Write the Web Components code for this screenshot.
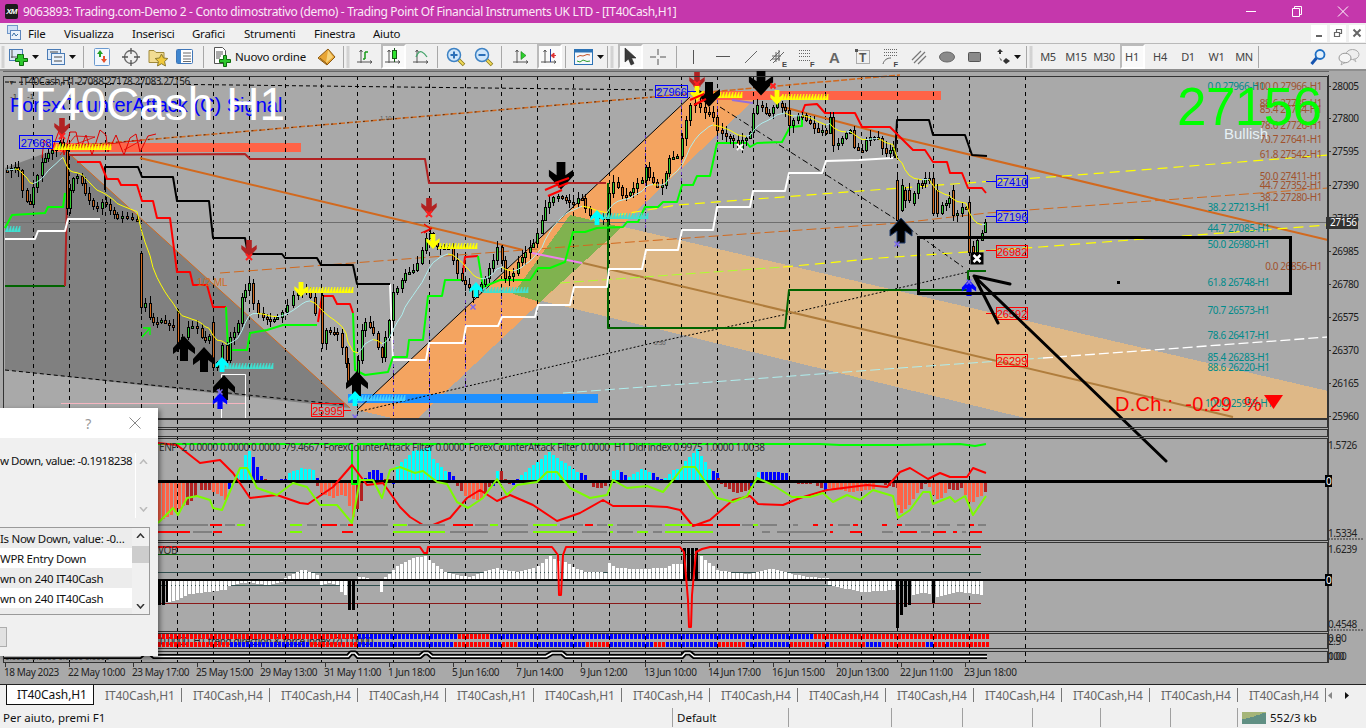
<!DOCTYPE html>
<html lang="it">
<head>
<meta charset="utf-8">
<title>IT40Cash,H1</title>
<style>
html,body{margin:0;padding:0;overflow:hidden;width:1366px;height:728px;background:#f0f0f0;font-family:"Noto Sans","Liberation Sans",sans-serif}
</style>
</head>
<body>
<mt-app>
  <title-bar>9063893: Trading.com-Demo 2 - Conto dimostrativo (demo) - Trading Point Of Financial Instruments UK LTD - [IT40Cash,H1]</title-bar>
  <menu-bar></menu-bar>
  <tool-bar></tool-bar>
  <chart-window></chart-window>
  <tab-strip></tab-strip>
  <status-bar></status-bar>
  <alert-dialog></alert-dialog>
</mt-app>
<script>
const UI='"Noto Sans","Liberation Sans",sans-serif';
function def(name,css,html,init){
  customElements.define(name,class extends HTMLElement{
    constructor(){super();const r=this.attachShadow({mode:'open'});r.innerHTML='<style>'+css+'</style>'+html;}
    connectedCallback(){if(init&&!this._d){this._d=1;init(this.shadowRoot,this);}}
  });
}
def('mt-app',':host{display:flex;flex-direction:column;position:relative;width:1366px;height:728px;overflow:hidden}','<slot></slot>');

def('title-bar',`:host{display:flex;align-items:center;height:23px;background:#c537ac;color:#fbeaf7;font:12px ${UI};flex:none}
.logo{width:13px;height:15px;margin:0 5px 0 5px;background:#1b1b1b;border-radius:2px;color:#fff;font:italic bold 8px "Liberation Sans",sans-serif;display:flex;align-items:center;justify-content:center;letter-spacing:-.8px}
.t{flex:1;white-space:nowrap;letter-spacing:-.34px}
.c{display:flex}
.c svg{width:46px;height:23px;display:block}`,
`<div class="logo">XM</div><div class="t"><slot></slot></div><div class="c">
<svg viewBox="0 0 46 23"><path d="M18 11.5h10" stroke="#fff"/></svg>
<svg viewBox="0 0 46 23"><path d="M18.5 8.5h7v8h-7zM20.5 8.5v-2h7v8h-2" fill="none" stroke="#fff"/></svg>
<svg viewBox="0 0 46 23"><path d="M18 6.5l10 10M28 6.5l-10 10" stroke="#fff"/></svg></div>`);

def('menu-bar',`:host{display:flex;align-items:center;height:20px;background:#f0f0f0;font:11.5px ${UI};letter-spacing:-.25px;color:#111;flex:none;padding-left:5px}
svg{width:17px;height:18px;flex:none;margin-right:6px}
span{display:block;white-space:nowrap}
.mdi{margin-left:auto;display:flex;gap:3px;margin-right:1px}
.mdi b{display:flex;width:16px;height:17px;background:#fff;align-items:center;justify-content:center}
.mdi svg{width:10px;height:10px;margin:0}`,
`<svg viewBox="0 0 17 18"><rect x="2.5" y="1.5" width="10" height="8" fill="#cfe0f5" stroke="#6f96c8"/><rect x="5.5" y="6.5" width="10" height="9" fill="#eaf2fb" stroke="#5c86bd"/><path d="M7 12l2-3 2 3 2-2" fill="none" stroke="#3a6ea5"/></svg>
<span style="width:36px">File</span><span style="width:68px">Visualizza</span><span style="width:60px">Inserisci</span><span style="width:52px">Grafici</span><span style="width:70px">Strumenti</span><span style="width:59px">Finestra</span><span>Aiuto</span>
<div class="mdi"><b><svg viewBox="0 0 10 10"><rect x="2" y="7" width="6" height="2" fill="#666"/></svg></b><b><svg viewBox="0 0 10 10"><path d="M1.5 4.5h5v4h-5zM3.5 4V1.5h5v4H7" fill="none" stroke="#666" stroke-width="1.2"/></svg></b><b><svg viewBox="0 0 10 10"><path d="M1.5 1.5l7 7M8.5 1.5l-7 7" stroke="#666" stroke-width="2"/></svg></b></div>`);

const ax='<path d="M6 3v13M2 15h15" stroke="#555" fill="none"/><path d="M4.5 5L6 3l1.5 2M15 13.5l2 1.5-2 1.5" stroke="#555" fill="none"/>';
const ICONS={
grip:w=>'<svg viewBox="0 0 4 22" width="4" height="22"><path d="M.5 1h3M.5 3h3M.5 5h3M.5 7h3M.5 9h3M.5 11h3M.5 13h3M.5 15h3M.5 17h3M.5 19h3M.5 21h3" stroke="#b5b5b5"/></svg>',
sep:()=>'<svg width="2" height="22"><rect width="1" height="22" fill="#a8a8a8"/></svg>',
dd:()=>'<svg width="7" height="4" viewBox="0 0 7 4"><path d="M0 0h7L3.500 4z" fill="#111"/></svg>',
new:()=>'<svg width="20" height="20" viewBox="0 0 20 20"><rect x="1.500" y="2.500" width="13" height="11" fill="#dbe8f7" stroke="#4a7bb5"/><path d="M4 3v8M3 10h9" stroke="#555"/><path d="M9.500 7.500h4v-0h2v4h4v3h-4v4h-4v-4h-4v-3h2z" fill="#2dc72d" stroke="#0d6b0d"/></svg>',
prof:()=>'<svg width="20" height="20" viewBox="0 0 20 20"><rect x="1.500" y="2.500" width="13" height="10" fill="#dbe8f7" stroke="#4a7bb5"/><rect x="5.500" y="6.500" width="13" height="11" fill="#e9f1fb" stroke="#4a7bb5"/><path d="M4 5h8M8 10h8M8 14h8" stroke="#4a4a4a"/></svg>',
market:()=>'<svg width="20" height="20" viewBox="0 0 20 20"><rect x="2.500" y="1.500" width="15" height="17" rx="1" fill="#f2f7fd" stroke="#6a9ad0"/><path d="M8 3l3 4H9v3H7V7H5z" fill="#22a022"/><path d="M12 16l-3-4h2V9h2v3h2z" fill="#e8502a"/></svg>',
cross:()=>'<svg width="20" height="20" viewBox="0 0 20 20"><circle cx="10" cy="10" r="6.500" fill="#eee" stroke="#666" stroke-width="1.300"/><path d="M10 1v6M10 13v6M1 10h6M13 10h6" stroke="#555" stroke-width="1.300"/></svg>',
folder:()=>'<svg width="20" height="20" viewBox="0 0 20 20"><path d="M1 3.500h5l2 2h8v10H1z" fill="#f2dc93" stroke="#a18a3a"/><path d="M13.500 7l2 4 4.300.5-3.200 3 .9 4.500-4-2.300-4 2.300.9-4.500-3.200-3 4.300-.5z" fill="#f0c93c" stroke="#8c7a30"/></svg>',
term:()=>'<svg width="20" height="20" viewBox="0 0 20 20"><rect x="1.500" y="2.500" width="16" height="14" rx="1" fill="#fff" stroke="#3f76b8"/><rect x="2" y="3" width="4" height="13" fill="#3f86cf"/><path d="M8 6h8M8 9h8M8 12h8M8 14.500h8" stroke="#6b6b6b"/></svg>',
order:()=>'<svg width="22" height="22" viewBox="0 0 22 22"><path d="M2.500 1.500h8l3 3v13h-11z" fill="#fff" stroke="#555"/><path d="M4 6h7M4 8h7M4 10h5M4 12h4" stroke="#555"/><path d="M11.500 9.500h3v4h4v3h-4v4h-3v-4h-4v-3h4z" fill="#2dc72d" stroke="#0d6b0d"/></svg>',
gold:()=>'<svg width="20" height="18" viewBox="0 0 20 18"><path d="M1 10L11 1l7 8-8 8z" fill="#e8a534" stroke="#8c5a12"/><path d="M11 2l5 7-7 6" fill="#f6d27a" stroke="none"/><path d="M3 10l7 6" stroke="#8c5a12"/></svg>',
bar:()=>'<svg width="20" height="20" viewBox="0 0 20 20">'+ax+'<path d="M10 12V5M10 5h3M8 12h2" stroke="#1a9a1a" stroke-width="1.500" fill="none"/></svg>',
candle:()=>'<svg width="20" height="20" viewBox="0 0 20 20">'+ax+'<path d="M11.500 1v14" stroke="#185a18"/><rect x="9.500" y="3.500" width="4" height="8" fill="#2ee32e" stroke="#185a18"/></svg>',
line:()=>'<svg width="20" height="20" viewBox="0 0 20 20">'+ax+'<path d="M5 10c2-5 4-6 6-5s3 2 5 5" stroke="#43a36a" stroke-width="1.300" fill="none"/></svg>',
zin:()=>'<svg width="20" height="20" viewBox="0 0 20 20"><path d="M12 12l6 6" stroke="#8a7a1a" stroke-width="3.500"/><path d="M12.500 12.500l5 5" stroke="#f3dc5a" stroke-width="1.800"/><circle cx="8" cy="8" r="6.500" fill="#cfe6fa" stroke="#3d82c4" stroke-width="1.500"/><path d="M4.500 8h7M8 4.500v7" stroke="#2a6fb8" stroke-width="2"/></svg>',
zout:()=>'<svg width="20" height="20" viewBox="0 0 20 20"><path d="M12 12l6 6" stroke="#8a7a1a" stroke-width="3.500"/><path d="M12.500 12.500l5 5" stroke="#f3dc5a" stroke-width="1.800"/><circle cx="8" cy="8" r="6.500" fill="#cfe6fa" stroke="#3d82c4" stroke-width="1.500"/><path d="M4.500 8h7" stroke="#2a6fb8" stroke-width="2"/></svg>',
auto:()=>'<svg width="20" height="20" viewBox="0 0 20 20">'+ax+'<path d="M10 4.500l5 4-5 4z" fill="#2dd12d" stroke="#197a19" stroke-width=".6"/></svg>',
shift:()=>'<svg width="20" height="20" viewBox="0 0 20 20">'+ax+'<path d="M11.500 2v13" stroke="#26419c"/><path d="M17 8.500h-3M12 8.500l3-2.500v5z" fill="#d33" stroke="#d33"/></svg>',
ind:()=>'<svg width="20" height="20" viewBox="0 0 20 20"><rect x=".5" y="2.500" width="18" height="15" fill="#f4f7fb" stroke="#2b72b5"/><rect x="1" y="3" width="17" height="2.500" fill="#2b72b5"/><path d="M3 10l3-1.500 3 .5 4-1.500 3 .5" stroke="#c2542b" fill="none"/><path d="M3 14l3 1 3-2 4 1.500 3-.5" stroke="#2c9c2c" fill="none"/></svg>',
cur:()=>'<svg width="14" height="20" viewBox="0 0 14 20"><path d="M2 1v14l3.500-3 2.500 6 3-1.500-2.500-5.500H13z" fill="#3a3a3a" stroke="#222" stroke-width=".6"/></svg>',
plus:()=>'<svg width="18" height="18" viewBox="0 0 18 18"><path d="M9 1v6M9 11v6M1 9h6M11 9h6" stroke="#555"/></svg>',
vl:()=>'<svg width="4" height="14"><rect x="1" width="1" height="14" fill="#555"/></svg>',
hl:()=>'<svg width="14" height="4"><rect y="1" width="14" height="1" fill="#555"/></svg>',
tl:()=>'<svg width="14" height="14" viewBox="0 0 14 14"><path d="M1 13L13 1" stroke="#666"/></svg>',
ch:()=>'<svg width="20" height="20" viewBox="0 0 20 20"><path d="M1 14L11 4M4 16L15 5M3 9l9 0M3 12l8 0M7 5v10M10 3v11" stroke="#666" fill="none"/><text x="13" y="19.500" font-family="Liberation Sans" font-weight="700" font-size="7.500" fill="#444">E</text></svg>',
fib:()=>'<svg width="20" height="20" viewBox="0 0 20 20"><path d="M2 3.500h12M2 6.500h12M2 9.500h12M2 13.500h12" stroke="#666" stroke-dasharray="1 1"/><text x="13" y="19.500" font-family="Liberation Sans" font-weight="700" font-size="7.500" fill="#444">F</text></svg>',
a:()=>'<svg width="14" height="16" viewBox="0 0 14 16"><text x="1" y="14" font-family="Liberation Sans" font-weight="700" font-size="15" fill="#666">A</text></svg>',
tt:()=>'<svg width="16" height="16" viewBox="0 0 16 16"><rect x="1.500" y="1.500" width="13" height="13" fill="none" stroke="#666" stroke-dasharray="1 1"/><rect x="0" y="0" width="3" height="3" fill="#555"/><text x="4" y="13" font-family="Liberation Sans" font-weight="700" font-size="12" fill="#555">T</text></svg>',
fan:()=>'<svg width="20" height="20" viewBox="0 0 20 20"><path d="M3 2.500h14M3 5.500h14M3 8.500h14" stroke="#666" stroke-dasharray="1 1"/><path d="M2 17c1-4 4-6 8-6" stroke="#666" fill="none"/><text x="12.500" y="19.500" font-family="Liberation Sans" font-weight="700" font-size="7.500" fill="#444">F</text></svg>',
par:()=>'<svg width="16" height="16" viewBox="0 0 16 16"><path d="M1 11l9-9M3 14L14 3M7 15l8-8" stroke="#777" stroke-width="1.200"/></svg>',
ell:()=>'<svg width="16" height="12" viewBox="0 0 16 12"><ellipse cx="8" cy="6" rx="7.500" ry="5" fill="#8a8a8a" stroke="#666"/></svg>',
rc:()=>'<svg width="14" height="12" viewBox="0 0 14 12"><rect x=".5" y="1.500" width="12" height="9" rx="1" fill="#8a8a8a" stroke="#555"/></svg>',
arr:()=>'<svg width="14" height="16" viewBox="0 0 14 16"><path d="M3 0l3 3H4v2H2V3H0z" fill="#333"/><path d="M2 8l3 3-1 1z" fill="#555"/><path d="M9 9l4 3-4 3-3-3z" fill="#333"/></svg>',
srch:()=>'<svg width="16" height="18" viewBox="0 0 16 18"><circle cx="10" cy="6.500" r="4.500" fill="#e4f1fc" stroke="#1e6fc4" stroke-width="1.800"/><path d="M6.500 10L1.500 16" stroke="#1554b0" stroke-width="3"/></svg>',
chat:()=>'<svg width="22" height="18" viewBox="0 0 22 18"><ellipse cx="14.500" cy="6.500" rx="6.500" ry="5" fill="#eee" stroke="#aaa"/><path d="M17 11l1 3-3-2.500z" fill="#ddd" stroke="#aaa" stroke-width=".7"/><ellipse cx="7" cy="10" rx="6" ry="4.800" fill="#f5f5f5" stroke="#999"/><path d="M4 14l-1 3 4-2.500z" fill="#eee" stroke="#999" stroke-width=".7"/></svg>'
};
const TOOLS=[[3,'grip'],[18,'new'],[35,'dd'],[56,'prof'],[72,'dd'],[84,'sep'],[102,'market'],[131,'cross'],[158,'folder'],[185,'term'],[204,'sep'],[223,'order'],[270.500,'Nuovo ordine'],[327,'gold'],[344,'sep'],[348,'grip'],[365,'bar'],[393,'candle',1],[421,'line'],[438,'sep'],[456,'zin'],[484,'zout'],[502,'sep'],[521,'auto'],[549,'shift',1],[566,'sep'],[584,'ind'],[600,'dd'],[608,'sep'],[612,'grip'],[630,'cur',1],[658,'plus'],[677,'sep'],[694,'vl'],[723,'hl'],[751,'tl'],[779,'ch'],[807,'fib'],[835,'a'],[863,'tt'],[891,'fan'],[919,'par'],[947,'ell'],[975,'rc'],[1004,'arr'],[1017,'dd'],[1027,'sep'],[1031,'grip'],[1048,'#M5'],[1076,'#M15'],[1104,'#M30'],[1132,'#H1',1],[1160,'#H4'],[1188,'#D1'],[1216.500,'#W1'],[1244,'#MN'],[1259,'sep'],[1318,'srch'],[1349,'chat']];
def('tool-bar',`:host{display:flex;align-items:center;height:28px;box-sizing:border-box;background:#f0f0f0;border-top:1px solid #b9b9b9;border-bottom:2px solid #8f8f8f;flex:none;font:11.5px ${UI};letter-spacing:-.2px;color:#111}
div{display:flex;align-items:center;justify-content:center;flex:none;height:25px;white-space:nowrap}
.on{background:#fafafa;border:2px solid #fff;border-top-color:#bbb;border-left-color:#bbb;box-sizing:border-box}
.tf{font-size:11px;color:#444;letter-spacing:-.3px}
svg{display:block}`,'',(r)=>{
  let right=0,h='';
  for(const [c,k,on] of TOOLS){
    const txt=k.startsWith('#')||k==='Nuovo ordine';
    const w=on?25:(k==='sep'?2:k==='dd'?8:k==='grip'?4:k==='Nuovo ordine'?75:txt?26:22);
    const left=c-w/2;
    h+=`<div class="${on?'on ':''}${k[0]==='#'?'tf':''}" style="width:${w}px;margin-left:${left-right}px">${txt?k.replace('#',''):ICONS[k]()}</div>`;
    right=left+w;
  }
  r.innerHTML+=h;
});

/* -------- chart ---------- */
const CLOSES=`7,170 11,168 15,167 18,170 22,190 27,201 30,204 33,187 37,175 42,162 45,158 48,153 52,150 56,148 60,142 63,146 67,208,150 70,190 73,178 77,176 82,183 85,193 89,200 93,206 97,208 102,202 106,204 110,210 114,214 117,218 122,216 127,217 132,219 137,220 141,307,253 145,303 150,317 153,322 157,322 161,320 165,323 169,325 173,327 178,347,312 182,337 188,327 192,326 197,328 202,337 205,340 209,336 213,367,322 217,362 222,345 227,360 230,337 234,332 238,323 242,297 245,290 249,283 253,303 258,313 263,317 267,319 270,320 274,319 277,317 282,312 287,305 293,295 298,291 302,290 306,292 310,297 315,313 322,343,295 326,330 330,332 334,332 337,333 342,347 346,363 348,383 353,393 358,360 362,330 365,322 370,327 373,333 378,347 382,357 385,337 389,320 393,292 397,288 402,280 405,273 409,272 413,270 417,263 422,250 426,238 430,233 433,243 437,246 440,247 444,247 448,247 453,260 457,273 462,280 465,284 469,287 473,297 477,290 481,284 485,278 489,268 493,260 497,247 502,260 505,278 509,276 513,273 518,262 522,257 525,252 530,247 533,243 537,233 542,220 545,207 549,202 553,197 558,196 562,197 566,200 569,202 573,203 578,198 582,198 585,208 590,215 594,216 598,217 603,217 607,217 609,193 613,182 618,187 622,195 626,195 630,192 633,188 637,183 642,180 646,167 649,177 653,182 657,187 662,185 666,173 669,158 673,157 677,156 682,138 686,120 690,105 695,103 700,107 705,112 709,112 713,117 717,130 722,133 726,136 730,138 733,140 738,148 742,140 746,138 750,132 753,113 757,105 762,107 766,113 769,113 773,107 777,103 782,107 785,110 789,125 793,120 798,115 802,115 806,120 810,123 814,128 818,132 822,130 826,133 830,117 833,145 838,143 842,138 846,133 850,130 854,147 858,150 862,150 866,140 870,137 874,137 878,138 882,148 886,153 890,150 893,147 897,220,180 902,185,210 905,200,190 909,200,190 914,193,203 918,183 922,183 925,178 929,178 933,213,178 937,213,190 942,205 946,203 949,198 953,215,190 957,213 962,207 966,207 969,252,202 973,252,246 977,240 982,233 985,222,232`;
function rng(seed){let s=seed;return ()=>{s=(s*1103515245+12345)&0x7fffffff;return s/0x7fffffff;};}
const esc=s=>s.replace(/&/g,'&amp;').replace(/</g,'&lt;');
function T(x,y,s,fill,size,o={}){
  if(+size===9.5){size=10;o=Object.assign({f:'"Noto Sans"',ls:-.4},o);}
  return `<text x="${x}" y="${y}" fill="${fill}" font-size="${size}" style="white-space:pre" font-family='${o.f||'"Liberation Sans"'}'${o.a?` text-anchor="${o.a}"`:''}${o.w?` font-weight="${o.w}"`:''}${o.ls?` letter-spacing="${o.ls}"`:''}>${esc(s)}</text>`;}
function P(pts,c,w,o={}){return `<polyline points="${pts}" fill="none" stroke="${c}" stroke-width="${w}"${o.d?` stroke-dasharray="${o.d}"`:''} stroke-linejoin="round"/>`;}
function R(x,y,w,h,c){return `<rect x="${x}" y="${y}" width="${w}" height="${h}" fill="${c}" shape-rendering="crispEdges"/>`;}
const DOWN='M-4 0H4V12L11 7V13L0 25L-11 13V7L-4 12Z';
function arrow(x,y,s,c,up,st){const sy=up?-s:s;return `<path transform="translate(${x} ${y}) scale(${s} ${sy})" d="${DOWN}" fill="${c}"${st?` stroke="${st}" stroke-width="${1/s}"`:''}/>`;}
function X(x,y,c,s=3,w=2){return `<path d="M${x-s} ${y-s}L${x+s} ${y+s}M${x+s} ${y-s}L${x-s} ${y+s}" stroke="${c}" stroke-width="${w}"/>`;}
function saw(x0,x1,y,c){let d='';for(let x=x0;x<x1;x+=3){d+=`M${x} ${y+3}L${x+3} ${y-3}V${y+3}`;}return `<path d="${d}" stroke="${c}" fill="${c}" stroke-width=".7"/>`;}
function box(x,y,w,h,txt,c){return `<rect x="${x+.5}" y="${y+.5}" width="${w}" height="${h}" fill="none" stroke="${c}"/>`+T(x+w/2+.5,y+h-1.500,txt,c,11,{a:'middle'});}
function bars(segs,zero,def){let s='';for(const g of segs){const [a,b,c,h0,hm,h1]=g;const mid=hm===undefined?h0:hm,end=h1===undefined?mid:h1;const n=Math.max(1,Math.round((b-a)/4));for(let i=0;i<=n;i++){const x=a+i*4;if(x>b)break;const t=i/n;const v=t<.5?h0+(mid-h0)*t*2:mid+(end-mid)*(t-.5)*2;const hh=Math.abs(v);s+=R(x,v>=0?zero-hh:zero,3,hh,c);}}return s;}
function dashes(y,base,list,w=2){const col={g:'#808080',r:'#ff0000',l:'#7cfc00'};return list.map(([a,b,c])=>R(base+a/3,y-w/2,(b-a)/3,w,col[c])).join('');}

function buildChart(){
  let s='';
  /* grounds */
  s+=R(0,71,1366,613,'#a9a9a9');
  s+=R(3,71,1326,1,'#666');
  s+=`<polygon points="5,168 62,147 350,408 5,370" fill="#808080"/>`;
  s+=`<polygon points="568,214 1328,391 1328,418 1040,418 1025,418 513,294" fill="#deb887" shape-rendering="crispEdges"/>`;
  s+=`<polygon points="357,410 690,97 757,97 418,418 392,418" fill="#f4a460" shape-rendering="crispEdges"/>`;
  s+=`<polygon points="570,215 622,227 540,302 513,294" fill="#80b24f" shape-rendering="crispEdges"/>`;
  /* bars */
  s+=R(53,143,248,9,'#ff6347')+R(697,91,244,9,'#ff6347')+R(348,394,250,9,'#1e90ff');
  /* pink level, white rect */
  s+=R(61,403,184,1,'#f5b5c0');
  s+=`<path d="M221.500 418V374.500H245.500V418" fill="none" stroke="#fff"/>`;
  /* grid */
  let gx=[];for(let x=33;x<=969;x+=36)gx.push(x);gx.push(1025);
  const panes=[[76,418],[419,427],[429,436],[438,540],[542,631],[633,648],[651,662]];
  for(const x of gx){s+=`<path d="M${x+.5} 76V662" stroke="#000" stroke-dasharray="4 4" shape-rendering="crispEdges"/>`;}
  s+=`<path d="M465.500 300V390M501.500 290V340M645.500 135V230M681.500 100V190M717.500 100V150M393.500 340V418M429.500 318V418" stroke="#6a3bc4" stroke-dasharray="3 3" shape-rendering="crispEdges"/>`;
  /* current-price line */
  s+=R(4,222,1324,1,'#6e6e6e');
  /* long lines */
  s+=P('5,82 150,84 400,87 660,90','#000',1,{d:'4 3'});
  s+=P('60,147 653,97 900,75','#d2691e',1.500,{d:'6 2'});
  s+=P('60,147 653,97','#000',.6,{d:'2 6'});
  s+=P('5,370 345,405','#000',1,{d:'4 3'});
  s+=P('357,412 657,342 783,315 968,272','#000',1,{d:'2 2'});
  s+=P('720,107 900,222 963,267','#000',1,{d:'6 3 2 3'});
  s+=P('62,147 350,408','#d2691e',1);
  s+=P('357,410 690,97','#000',1);
  s+=P('140,158 450,232 523,250','#d2691e',2);
  s+=P('532,253 582,263','#ee82ee',2);
  s+=P('583,263 900,338 1233,417','#b07d3c',2);
  s+=P('732,100 753,103','#9370db',2);
  s+=P('783,107 900,138 1328,240','#d2691e',2);
  s+=P('220,273 617,243 900,223 987,213 1328,188','#d2691e',1,{d:'10 4'});
  s+=P('600,218 677,205 900,188 980,182 1077,175 1328,155','#ffff00',1.200,{d:'10 6'});
  s+=P('560,283 783,267','#adff2f',1,{d:'10 4'});
  s+=P('783,267 880,258 1040,247 1157,238 1328,225','#ffff00',1.200,{d:'10 6'});
  s+=P('563,393 900,368 1043,358','#afeeee',1,{d:'10 4'});
  s+=P('1043,358 1153,350 1328,337','#fff',1.300,{d:'10 4'});
  /* stepped */
  s+=P('5,286 65,286','#006400',2);
  s+=P('65,286 68,155 245,154 250,159 425,159 429,183 606,183','#b22222',2);
  s+=P('608,183 608,328 785,328 789,290 968,290 968,271 986,271','#006400',2);
  s+=P('5,239 35,239 38,231 65,231 68,219 100,219','#fff',2);
  s+=P('390,284 393,360 426,360 429,343 463,343 466,326 498,326 502,317 535,317 538,305 570,305 574,287 607,287 609,269 642,269 646,250 678,250 682,230 713,230 717,207 750,207 753,191 785,191 789,173 822,173 826,161 859,160 893,158','#fff',2);
  s+=P('105,190 105,167 138,167 142,177 173,177 177,201 209,201 213,238 245,238 248,254 282,254 285,258 317,258 321,265 353,265 357,284 390,284','#000',2);
  s+=P('895,158 897,120 929,120 933,135 965,135 972,155 987,156','#000',2);
  s+=P('5,228 12,215 45,213 48,207 63,207 65,193','#00ff00',2);
  s+=P('77,162 100,162 107,179 118,179 121,185 137,185 142,201 153,201 157,218 170,218 177,272 190,272 193,285 207,285 213,307 226,307','#ff0000',2);
  s+=P('226,307 228,350 247,350 250,333 267,330 283,325 317,325','#00ff00',2);
  s+=P('318,322 322,296 333,296 337,304 350,304 353,313','#ff0000',2);
  s+=P('353,313 355,370 365,375 388,372 393,357 407,357 409,340 423,340 428,296 442,296 445,280 462,280','#00ff00',2);
  s+=P('462,280 465,257 478,256','#ff0000',2);
  s+=P('478,256 483,287 500,280 530,280 538,268 550,268 565,262 573,232 585,232 597,228 623,227 627,222 638,222 645,207 658,207 663,202 677,202 682,185 693,185 697,176 710,176 717,143 747,143 750,147 757,143 782,142 790,127 802,126 802,115','#00ff00',2);
  s+=P('802,113 805,105 817,104 825,113 855,113 862,127 890,127 898,135 913,150 925,150 933,162 947,162 950,173 962,173 968,188 982,188 986,193','#ff0000',2);
  /* candles + smoothed band */
  const rows=CLOSES.split(' ').map(p=>p.split(',').map(Number));
  const r=rng(7);
  let ema=170,prev=null,prevC=170,cand='',band='';
  for(const row of rows){
    const [x,c,oIn]=row;const o=oIn===undefined?prevC:oIn;
    ema+= (c-ema)*.18;
    const ly=+ema.toFixed(1);
    if(prev){const col=(ly<c)?'#ffff00':'#afeeee';band+=`<path d="M${prev[0]} ${prev[1]}L${x} ${ly}" stroke="${col}" fill="none"/>`;}
    prev=[x,ly];
    const top=Math.min(o,c),bot=Math.max(o,c);
    const hi=top-Math.round(1+r()*6),lo=bot+Math.round(1+r()*7);
    cand+=`<path d="M${x+.5} ${hi}V${lo}" stroke="#000" shape-rendering="crispEdges"/>`;
    cand+=`<rect x="${x-1+.5}" y="${top+.5}" width="2" height="${Math.max(2,bot-top)}" fill="${c<o?'#32cd32':'#d2691e'}" stroke="#000" shape-rendering="crispEdges"/>`;
    prevC=c;
  }
  s+=cand+band;
  /* red sketchy strokes top-left */
  s+=P('42,158 44,140 52,150 60,128 64,155 70,132 76,132 80,150 86,135 92,155 100,130 106,135 108,152 116,135 124,155 130,138 136,134 140,152 148,136 156,134','#e00000',1);
  s+=P('60,155 75,136 95,137 60,150 142,140 124,150','#e00000',.8);
  /* strips */
  s+=saw(54,110,147,'#ffff00')+saw(305,352,290,'#ffff00')+saw(438,477,246,'#ffff00')+saw(700,740,95,'#ffff00')+saw(780,827,97,'#ffff00');
  s+=saw(5,20,229,'#40e0d0')+saw(222,272,366,'#40e0d0')+saw(357,404,398,'#48d1ff')+saw(483,528,290,'#40e0d0')+saw(600,647,216,'#40e0d0');
  /* arrows */
  const b='#000';
  s+=arrow(561,162,1.100,b)+arrow(709,82,1,b)+arrow(761,68,1.100,b);
  s+=arrow(184,361,1,b,1)+arrow(204,372,1,b,1)+arrow(224,400,1,b,1)+arrow(357,396,1,b,1)+arrow(901,243,1,b,1,'#1f3b6b');
  s+=arrow(249,240,.7,'#b22222')+arrow(429,198,.7,'#b22222')+arrow(62,118,.7,'#b22222')+arrow(697,72,.7,'#b22222');
  s+=X(249,257,'#ff2020')+X(429,214,'#ff2020')+X(62,136,'#ff2020')+X(697,84,'#ff2020')+X(773,86,'#ff2020',2.500);
  s+=arrow(301,282,.6,'#ffff00')+arrow(433,234,.6,'#ffff00')+arrow(697,86,.6,'#ffff00')+arrow(777,90,.6,'#ffff00');
  s+=arrow(222,372,.6,'#00ffff',1)+arrow(355,406,.6,'#00ffff',1)+arrow(476,297,.6,'#00ffff',1)+arrow(597,225,.6,'#00ffff',1);
  s+=arrow(220,409,.65,'#0000ff',1)+arrow(969,296,.65,'#0000ff',1);
  s+=X(220,392,'#7b68ee',2.500,1.500)+X(969,282,'#7b68ee',2.500,1.500)+X(897,244,'#7b68ee',2.500,1.500)+X(473,307,'#7b68ee',2.500,1.500)+X(355,417,'#7b68ee',2.500,1.500);
  s+=X(740,147,'#fff',3,2);
  s+=`<path d="M142 337L150 328M143 328H150V335" stroke="#0f0" fill="none" stroke-width="1.300"/>`;
  s+=`<path d="M421 233L432 228M424 224L431 229L424 233" stroke="#e00" fill="none" stroke-width="1.300"/>`;
  s+=`<path d="M545 190l14-6M548 196l14-6M555 183l14-5M558 187l10-4" stroke="#f00" stroke-width="2"/><path d="M690 100l14-6M694 105l12-6" stroke="#f00" stroke-width="2"/>`;
  /* boxed labels */
  s+=box(19,135,33,13,'27668','#0000ff')+R(52,141,8,1,'#00f');
  s+=box(655,85,32,12,'27966','#0000ff')+R(687,91,9,1,'#00f');
  s+=box(996,175,31,12,'27410','#0000ff')+R(986,181,10,1,'#00f');
  s+=box(996,210,31,12,'27196','#0000ff')+R(986,216,10,1,'#00f');
  s+=box(996,245,31,12,'26982','#ff0000')+R(986,250,10,1,'#f00');
  s+=box(996,307,31,12,'26592','#ff0000')+R(986,313,10,1,'#f00');
  s+=box(996,354,31,12,'26299','#ff0000');
  s+=box(311,403,32,13,'25995','#ff0000')+R(343,410,8,1,'#f00');
  /* fib labels */
  const TEAL='#008b8b',SI='#a0522d',F='9.500';
  for(const [y,t] of [[90,'0.0 27966-H1'],[211,'38.2 27213-H1'],[232,'44.7 27085-H1'],[248,'50.0 26980-H1'],[286,'61.8 26748-H1'],[314,'70.7 26573-H1'],[339,'78.6 26417-H1'],[361,'85.4 26283-H1'],[371,'88.6 26220-H1'],[407,'100.0 25959-H1']]){s+=T(y===407?1205:1207.500,y,t,TEAL,F);}
  for(const [y,t] of [[90,'100.0 27966-H1'],[107,'88.6 27785-H1'],[113,'85.4 27764-H1'],[129,'78.6 27726-H1'],[143,'70.7 27641-H1'],[158,'61.8 27542-H1'],[180,'50.0 27411-H1'],[189,'44.7 27352-H1'],[201,'38.2 27280-H1'],[270,'0.0 26856-H1']]){s+=T(1322,y,t,SI,F,{a:'end'});}
  /* big texts */
  s+=T(10,112,'ForexCounterAttack (C) Signal','#0000ff',20);
  s+=T(14,120,'IT40Cash H1','#ffffff',46);
  s+=T(1177,125,'27156','#00ff00',53,{ls:-.6});
  s+=T(1224,139,'Bullish','#e6f0f5',15);
  s+=T(1115,411,'D.Ch.:  -0.29  %','#ff0000',20,{ls:.3});
  s+=`<path d="M1264 395H1283L1273.500 409Z" fill="#ff0000"/>`;
  s+=T(8,85,'▼','#333',7)+T(20,85,'IT40Cash,H1 27088 27178 27083 27156','#222',9.500);
  s+=T(10,99,'-1','#333',8)+T(27,99,'-1','#333',8);
  s+=T(380,120,'1.10','#555',6)+T(654,345,'0.50','#555',6);
  s+=T(197,286,'1/2 ML','#d2691e',10);
  /* annotation rectangle + arrow */
  s+=`<rect x="918" y="237" width="372" height="56" fill="none" stroke="#000" stroke-width="3" shape-rendering="crispEdges"/>`;
  s+=R(1117,281,3,3,'#000');
  s+=`<path d="M974 276L1166 461M974 276L1010 284M974 276L998 323" stroke="#000" stroke-width="3" stroke-linecap="round" fill="none"/>`;
  s+=`<rect x="970.500" y="252.500" width="13" height="12" fill="#000"/>`+X(977,258.500,'#fff',3.500,2.500);
  /* pane frames */
  for(const [a,b] of panes){s+=`<rect x="3.500" y="${a+.5}" width="1324" height="${b-a}" fill="none" stroke="#333" shape-rendering="crispEdges"/>`;}
  /* pane 1 */
  const ZA=481;
  s+=bars([[158,182,'#ff6347',-40,-34,-25],[186,196,'#b22222',-24,-18,-10],[200,210,'#b22222',-9,-9,-9],[212,226,'#ff6347',-11,-15,-22],[228,231,'#0000ff',-8],[236,240,'#00ffff',8,10,12],[244,248,'#00ffff',26,28,30],[252,252,'#0000ff',24],[256,256,'#0000ff',14],[260,260,'#0000ff',5],[264,264,'#b22222',2],[280,284,'#0000ff',2],[288,312,'#00ffff',8,13,11],[316,316,'#0000ff',3],[316,316,'#b22222',-5],[320,344,'#ff6347',-12,-17,-12],[344,352,'#ff6347',-15,-25,-36],[356,360,'#b22222',-28,-25,-20],[364,364,'#0000ff',3],[368,380,'#0000ff',9,12,8],[384,388,'#b22222',2],[392,392,'#0000ff',-3],[396,428,'#00ffff',15,30,34],[432,444,'#00ffff',22,16,10],[448,452,'#0000ff',9,7,5],[456,462,'#b22222',-5,-10,-15],[464,482,'#ff6347',-15,-19,-18],[484,488,'#b22222',-12,-8,-6],[492,492,'#0000ff',-5],[496,496,'#0000ff',2],[496,496,'#00ffff',10],[500,500,'#b22222',10],[504,508,'#b22222',2,-3],[512,512,'#0000ff',-4],[516,516,'#0000ff',2],[520,576,'#00ffff',6,29,9],[580,584,'#0000ff',8,7,6],[592,606,'#b22222',-6,-7,-3],[612,618,'#00ffff',10,11,10],[620,626,'#0000ff',9,6,3],[628,650,'#00ffff',4,12,8],[652,660,'#0000ff',8,4,2],[664,680,'#00ffff',3,11,13],[684,708,'#00ffff',20,32,12],[712,716,'#0000ff',10,9,8],[717,717,'#b22222',3],[720,748,'#b22222',-3,-12,-9],[750,750,'#0000ff',-5],[757,757,'#00ffff',9],[761,785,'#0000ff',9,9,8],[789,812,'#b22222',-2,-3,-3],[800,800,'#0000ff',-2],[816,822,'#b22222',-5,-7,-9],[824,824,'#0000ff',-9],[828,872,'#ff6347',-7,-11,-8],[876,880,'#0000ff',-2],[884,896,'#b22222',-4,-6,-7],[897,897,'#ff6347',-24],[900,916,'#ff6347',-32,-24,-12],[920,924,'#b22222',-8,-4,-3],[928,928,'#ff6347',-6],[932,944,'#ff6347',-14,-20,-12],[948,960,'#b22222',-8,-10,-7],[964,976,'#ff6347',-14,-24,-16],[980,980,'#ff6347',-15],[984,984,'#b22222',-11]],ZA);
  s+=R(4,480,1323,3,'#000');
  s+=P('158,444 335,444 352,444 352,484 358,484 358,444 450,444 820,444 840,445 900,445 960,444 975,446 986,444','#00ff00',2);
  s+=P('158,443 177,445 200,463 220,460 233,473 250,498 277,495 300,503 308,504 333,487 352,465 367,485 383,483 400,507 410,517 423,525 433,525 450,518 467,498 480,490 497,501 510,495 533,505 557,521 580,513 603,500 613,506 647,506 667,507 680,510 693,526 710,520 733,500 750,496 758,504 783,505 800,498 827,490 867,485 887,487 900,472 910,468 928,479 940,473 950,477 967,477 973,468 986,473','#ff0000',2);
  s+=P('158,523 173,508 178,515 187,498 197,496 210,500 213,508 222,510 240,468 247,468 257,488 277,495 293,483 307,487 320,505 337,505 352,523 360,480 373,480 382,498 390,470 400,467 415,473 423,471 437,482 447,484 457,502 468,508 483,498 497,479 507,495 517,485 537,482 547,472 557,472 570,488 590,498 607,495 613,480 627,488 647,486 663,492 673,480 683,467 695,467 717,498 733,502 747,496 757,478 773,485 792,497 810,497 823,493 833,502 847,495 860,500 873,490 893,496 898,518 910,510 923,492 930,492 933,504 950,497 955,502 965,496 973,515 986,496','#7cfc00',2);
  s+=dashes(525,400,[[0,20,'l'],[25,135,'g'],[160,220,'r'],[225,265,'g'],[270,295,'l'],[305,385,'g'],[400,470,'l'],[480,550,'g'],[555,580,'r'],[590,620,'g'],[625,640,'l'],[650,725,'g'],[745,785,'g'],[795,875,'l'],[880,940,'r'],[955,1020,'r'],[1025,1060,'g'],[1060,1075,'l'],[1080,1130,'g'],[1180,1195,'g'],[1240,1255,'r'],[1290,1300,'r'],[1315,1350,'g'],[1360,1375,'r'],[1445,1460,'r'],[1490,1500,'r']]);
  s+=dashes(532,400,[[0,135,'l'],[150,265,'g'],[305,385,'g'],[400,530,'l'],[545,620,'g'],[630,640,'l'],[650,700,'g'],[710,745,'l'],[760,785,'g'],[795,940,'l'],[1085,1110,'g'],[1130,1280,'g'],[1290,1300,'r'],[1350,1385,'r'],[1445,1480,'g']]);
  s+=dashes(525,0,[[475,625,'g'],[630,665,'r'],[675,705,'g'],[710,735,'l'],[870,905,'l'],[920,950,'g'],[965,1010,'r'],[1020,1040,'g'],[1045,1060,'r'],[1075,1165,'g'],[1180,1200,'l']]);
  s+=dashes(532,0,[[475,570,'r'],[580,635,'g'],[640,665,'r'],[870,905,'l'],[1025,1060,'r'],[1180,1200,'l']]);
  s+=dashes(525,900,[[0,5,'r'],[15,90,'g'],[110,150,'g'],[170,195,'g'],[210,222,'r'],[235,258,'g']]);
  s+=dashes(532,900,[[0,52,'r'],[62,90,'g'],[100,138,'r'],[160,172,'r'],[185,198,'g'],[210,245,'r']]);
  s+=T(159,451,'ENP  2 0.0000 0.0000 0.0000 -79.4667  ForexCounterAttack Filter 0.0000  ForexCounterAttack Filter 0.0000  H1 Didi index 0.9975 1.0000 1.0038','#2b2b2b',9.500);
  /* pane 2 */
  const ZB=580;
  s+=R(158,554,823,1,'#006400')+R(158,572,823,1,'#2f4f4f')+R(158,585,823,1,'#2f4f4f')+R(158,603,823,1,'#8b1a1a');
  s+=bars([[158,166,'#000',-25,-25,-22],[168,184,'#fff',-22,-20,-16],[188,224,'#fff',-14,-12,-10],[228,250,'#fff',-6,-3,-2],[252,280,'#fff',-3,-5,-2],[284,318,'#fff',2,11,3],[320,336,'#fff',-5,-3,-5],[340,346,'#fff',-12,-15,-15],[348,354,'#000',-30],[358,376,'#fff',3,2,-2],[380,380,'#fff',-12],[384,396,'#fff',3,8,14],[400,424,'#fff',16,22,24],[428,444,'#fff',20,14,8],[448,464,'#fff',7,5,4],[468,496,'#fff',3,8,12],[500,534,'#fff',10,8,13],[537,560,'#fff',14,24,16],[564,582,'#fff',18,12,8],[584,606,'#fff',8,8,7],[608,612,'#fff',17,14],[616,660,'#fff',12,11,12],[664,680,'#fff',12,16,16],[683,697,'#000',32],[700,712,'#fff',24,18,14],[716,750,'#fff',10,7,6],[752,788,'#fff',7,12,7],[790,826,'#fff',6,3,2],[828,892,'#fff',-5,-12,-10],[896,908,'#000',-48,-28,-25],[912,930,'#fff',-15,-12,-15],[932,934,'#000',-23],[936,980,'#fff',-17,-12,-15]],ZB);
  s+=R(4,579,1323,2,'#000');
  s+=P('158,547 420,547 424,553 427,553 428,547 540,547 552,547 558,555 559,595 561,595 563,555 566,547 680,547 684,552 688,600 689,627 691,627 692,595 696,552 702,549 710,547 981,547','#ff0000',2);
  s+=T(158,554,'VOB','#333',9.500);
  /* pane 3 */
  function squares(y,segs){let o='';for(let x=158;x<988;x+=4){let c='#0000ff';for(const [a,b,k] of segs){if(x>=a&&x<b)c=k;}o+=R(x,y,3,5,c);}return o;}
  const RD='#ff0000';
  s+=T(160,645,'0.0000  H1 trend direction & force index (?) 1.0000','#222',9.500);
  s+=squares(634,[[158,358,RD],[456,487,RD],[812,988,RD]]);
  s+=squares(642,[[158,227,RD],[310,355,RD],[452,487,RD],[500,515,RD],[583,607,RD],[652,663,RD],[715,743,RD],[787,823,RD],[828,863,RD],[880,924,RD],[932,988,RD]]);
  /* pane 4 */
  s+=T(5,660,'0.0000 0.0000 0.0000 0.0000','#333',8);
  const bump=(c,w)=>P('4,656.5 140,656.5 144,653 150,653 154,656.5 348,656.5 351,653 355,653 358,656.5 420,656.5 424,653 428,653 432,656.5 546,656.5 552,653 562,653 566,656.5 682,656.5 685,653 690,653 694,656.5 987,656.5',c,w);
  s+=bump('#000',5)+bump('#fff',1.500);
  /* right axis */
  s+=R(1328,75,1,588,'#333');
  const ticks=[[86,'28005'],[118,'27800'],[151,'27595'],[185,'27390'],[218,'27185'],[251,'26985'],[284,'26780'],[317,'26575'],[350,'26370'],[383,'26165'],[416,'25960']];
  for(const [y,t] of ticks){s+=R(1328,y,3,1,'#333')+T(1332,y+4,t,'#1a1a1a',9.500);}
  s+=R(1326,217,32,12,'#333')+T(1330,226,'27156','#fff',9.500);
  s+=T(1328,449,'1.5726','#222',9.500)+T(1328,537,'1.5334','#222',9.500)+T(1328,553,'1.6239','#222',9.500)+T(1328,628,'0.4548','#222',9.500);
  s+=`<path d="M1328 539H1363M1328 630H1363" stroke="#333" stroke-dasharray="2 1"/>`;
  s+=R(1325,475,7,12,'#000')+T(1326,485,'0','#fff',9.500)+R(1325,574,7,12,'#000')+T(1326,584,'0','#fff',9.500);
  s+=T(1328,642,'0.00','#222',9.500)+T(1328,645,'2.5','#222',9.500);
  s+=T(1328,660,'100','#222',9.500)+T(1328,660,'0.00','#222',9.500);
  /* time axis */
  const tl=['18 May 2023','22 May 10:00','23 May 17:00','25 May 15:00','29 May 13:00','31 May 11:00','1 Jun 18:00','5 Jun 16:00','7 Jun 14:00','9 Jun 12:00','13 Jun 10:00','14 Jun 17:00','16 Jun 15:00','20 Jun 13:00','22 Jun 11:00','23 Jun 18:00'];
  tl.forEach((t,i)=>{const x=4+i*64;s+=R(x+1,663,1,4,'#333')+T(x,676,t,'#222',9.500);});
  return s;
}
def('chart-window',':host{display:block;height:613px;flex:none;background:#a9a9a9}svg{display:block}','<svg width="1366" height="613" viewBox="0 71 1366 613" xmlns="http://www.w3.org/2000/svg"></svg>',r=>{r.querySelector('svg').innerHTML=buildChart();});

/* tabs */
const TABS=['H1','H1','H4','H4','H4','H1','H1','H4','H4','H4','H4','H4','H4','H4','H4'];
def('tab-strip',`:host{display:flex;height:22px;flex:none;background:#f0f0f0;border-top:1px solid #222;box-sizing:border-box;font:12px ${UI};letter-spacing:-.1px;color:#666;padding-left:6px;position:relative;overflow:hidden;align-items:flex-start}
.t{width:88px;height:20px;flex:none;box-sizing:border-box;display:flex;align-items:center;padding-left:11px;position:relative;white-space:nowrap}
.t+.t::after{content:"";position:absolute;right:0;top:3px;bottom:3px;width:1px;background:#777}
.t.a{background:#fff;border:1px solid #111;border-top:0;color:#111;width:88px;padding-left:10px}
.nav{position:absolute;right:0;top:0;width:40px;height:20px;background:#f0f0f0;display:flex;align-items:center;gap:13px;padding-left:2px;box-sizing:border-box}`,'',r=>{
  let h='';TABS.forEach((k,i)=>{h+=`<div class="t${i?'':' a'}">IT40Cash,${k}</div>`;});
  h+='<div class="nav"><svg width="4" height="7"><path d="M4 0v7L0 3.500z" fill="#888"/></svg><svg width="4" height="7"><path d="M0 0v7L4 3.500z" fill="#111"/></svg></div>';
  r.innerHTML+=h;
});

/* status */
def('status-bar',`:host{display:flex;height:22px;flex:none;background:#f0f0f0;font:11.5px ${UI};color:#111;align-items:stretch}
div{box-sizing:border-box;display:flex;align-items:center;white-space:nowrap;flex:none;padding:0 0 0 5px}
div+div{position:relative}
div+div::before{content:"";position:absolute;left:0;top:2px;bottom:1px;width:1px;background:#a0a0a0}`,
`<div style="width:672px;padding-left:3px">Per aiuto, premi F1</div><div style="width:116px">Default</div><div style="width:103px"></div><div style="width:71px"></div><div style="width:70px"></div><div style="width:68px"></div><div style="width:70px"></div><div style="width:67px"></div><div style="flex:1;gap:4px"><svg width="24" height="13" viewBox="0 0 24 13"><path d="M1 1v12M3 1v12M5 1v12M7 1v12M9 1v12M11 1v12M13 1v12M15 1v12M17 1v12M19 1v12M21 1v12M23 1v12" stroke="#5a7a00"/><path d="M1 8v5M3 8v5M5 7v6M7 7v6M9 6v7M11 6v7M13 5v8M15 4v9M17 4v9M19 3v10M21 2v11M23 2v11" stroke="#1d6b8f"/></svg>552/3 kb</div>`);

/* dialog */
def('alert-dialog',`:host{position:absolute;left:0;top:408px;width:158px;height:248px;background:#f0f0f0;box-shadow:2px 2px 5px rgba(0,0,0,.45);font:11.5px ${UI};letter-spacing:-.3px;color:#111;display:flex;flex-direction:column;overflow:visible}
.h{height:30px;background:#fff;display:flex;justify-content:flex-end;align-items:center;flex:none;color:#999;font-size:14px;padding-right:17px;gap:38px}
.h svg{display:block}
.m{height:65px;margin-top:15px;flex:none;display:flex;white-space:nowrap;overflow:hidden}
.m .tx{width:134px;height:20px;letter-spacing:-.46px}
.m .sb{width:16px;margin-left:1px;border-left:1px solid #fff;display:flex;flex-direction:column;justify-content:space-between;align-items:center;padding:6px 0;box-sizing:border-box}
.l{margin-top:9px;width:150px;height:88px;box-sizing:border-box;border:1px solid #9a9a9a;border-left:0;display:flex;flex:none;background:#fff}
.rows{width:132px;overflow:hidden;white-space:nowrap}
.rows div{height:20px;line-height:21px;background:#fff;overflow:hidden}
.rows div:nth-child(odd){background:#ececec}
.vs{width:17px;background:#f0f0f0;position:relative;display:flex;flex-direction:column;align-items:center;justify-content:space-between;padding:5px 0;box-sizing:border-box}
.thumb{position:absolute;left:0;top:18px;width:17px;height:17px;background:#cdcdcd}
.b{margin-top:12px;width:7px;height:20px;background:#e1e1e1;border:1px solid #adadad;border-left:0;box-sizing:border-box;flex:none}`,
`<div class="h"><span>?</span><svg width="12" height="12" viewBox="0 0 12 12"><path d="M.5.5l11 11M11.500.5l-11 11" stroke="#888"/></svg></div>
<div class="m"><div class="tx">w Down, value: -0.1918238</div><div class="sb"><svg width="9" height="5" viewBox="0 0 9 5"><path d="M1 5l3.500-4L8 5" fill="none" stroke="#bbb" stroke-width="1.500"/></svg><svg width="9" height="5" viewBox="0 0 9 5"><path d="M1 0l3.500 4L8 0" fill="none" stroke="#bbb" stroke-width="1.500"/></svg></div></div>
<div class="l"><div class="rows"><div>Is Now Down, value: -0…</div><div>WPR Entry Down</div><div>wn on 240 IT40Cash</div><div>wn on 240 IT40Cash</div><div></div></div><div class="vs"><div class="thumb"></div><svg width="9" height="5" viewBox="0 0 9 5"><path d="M1 5l3.500-4L8 5" fill="none" stroke="#333" stroke-width="1.500"/></svg><svg width="9" height="5" viewBox="0 0 9 5"><path d="M1 0l3.500 4L8 0" fill="none" stroke="#333" stroke-width="1.500"/></svg></div></div>
<div class="b"></div>`);
</script>
</body>
</html>
